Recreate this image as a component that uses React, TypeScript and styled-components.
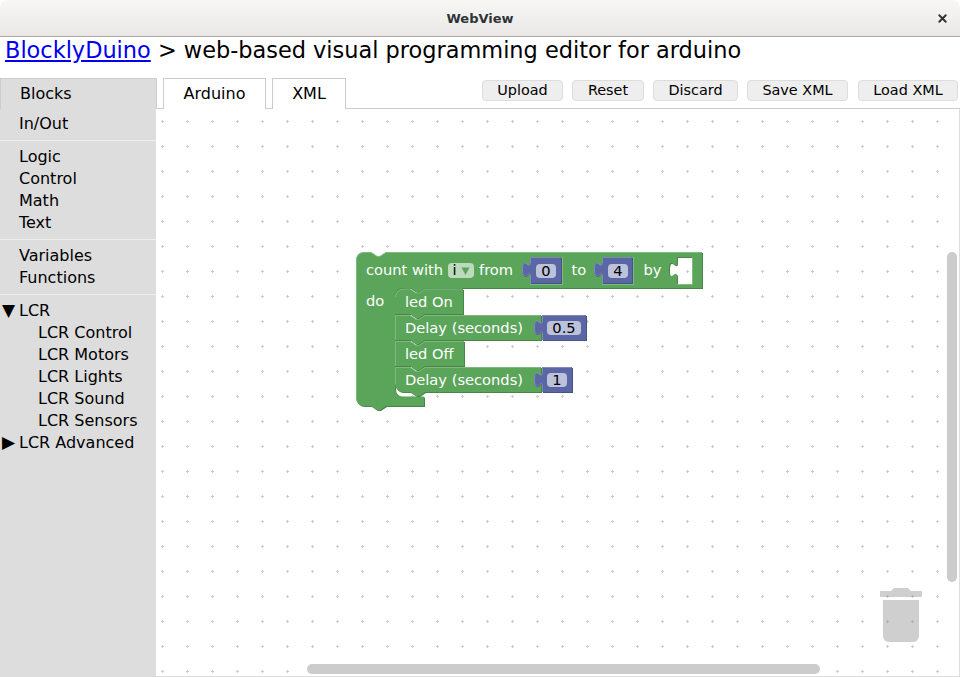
import React from "react";
import styled, { createGlobalStyle } from "styled-components";
import { X } from "lucide-react";

const GlobalStyle = createGlobalStyle`
    html, body {
        margin: 0;
        height: 100%;
        overflow: hidden;
        background: #fff;
        font-family: "DejaVu Sans", sans-serif;
        color: #000;
    }
`;

const Window = styled.div`
    display: flex;
    flex-direction: column;
    width: 960px;
    height: 677px;
`;

const TitleBar = styled.div`
    display: flex;
    flex: none;
    align-items: center;
    justify-content: center;
    position: relative;
    height: 36px;
    box-sizing: content-box;
    border-bottom: 1px solid #a9a9a7;
    border-radius: 8px 8px 0 0;
    background: linear-gradient(#f8f7f6, #e9e8e7);
    font-size: 13px;
    font-weight: bold;
    color: #2e3436;
`;

const CloseButton = styled.div`
    display: flex;
    position: absolute;
    right: 11.5px;
    top: 11.5px;
    color: #2e3436;
`;

const Heading = styled.div`
    flex: none;
    height: 41px;
    padding-left: 5px;
    font-size: 22.43px;
    line-height: 27px;
    white-space: nowrap;

    a {
        color: #0000ee;
    }
`;

const Main = styled.div`
    display: flex;
    flex: 1;
    min-height: 0;
`;

const Sidebar = styled.div`
    display: flex;
    flex: none;
    flex-direction: column;
    width: 156px;
    background: #ddd;
    font-size: 16px;
`;

const SidebarTab = styled.div`
    flex: none;
    width: 157px;
    height: 31px;
    padding-left: 19px;
    box-sizing: border-box;
    border: 1px solid #ccc;
    border-bottom: none;
    line-height: 29px;
    position: relative;
    z-index: 1;
    background: #ddd;
`;

const Group = styled.div<{ $top: number; $bottom: number }>`
    padding: ${(p) => p.$top}px 0 ${(p) => p.$bottom}px;
    border-bottom: 1px solid #eee;

    &:last-child {
        border-bottom: none;
    }
`;

const TreeItem = styled.div<{ $nested?: boolean }>`
    display: flex;
    height: 22px;
    line-height: 22px;
    padding-left: ${(p) => (p.$nested ? 38 : 19)}px;
    position: relative;
    white-space: nowrap;
`;

const Caret = styled.span`
    position: absolute;
    left: 2px;
    top: -1px;
    font-size: 17px;
    line-height: 22px;
`;

const Content = styled.div`
    display: flex;
    flex: 1;
    flex-direction: column;
    min-width: 0;
`;

const TabRow = styled.div`
    display: flex;
    flex: none;
    align-items: flex-start;
    height: 31px;
    padding: 0 2px 0 7px;
    box-sizing: border-box;
    border-bottom: 1px solid #ccc;
`;

const Tab = styled.div<{ $width: number }>`
    flex: none;
    width: ${(p) => p.$width}px;
    height: 31px;
    margin-right: 6px;
    box-sizing: border-box;
    border: 1px solid #ccc;
    border-bottom: none;
    background: #fff;
    font-size: 16px;
    line-height: 29px;
    text-align: center;
`;

const ButtonBar = styled.div`
    display: flex;
    gap: 9px;
    margin-left: auto;
    padding-top: 2px;
`;

const ToolButton = styled.div<{ $width: number }>`
    width: ${(p) => p.$width}px;
    height: 21px;
    box-sizing: border-box;
    border: 1px solid #ddd;
    border-radius: 4px;
    background: #eee;
    font-size: 14.4px;
    line-height: 18px;
    text-align: center;
    white-space: nowrap;

    &:last-child {
        margin-left: 1px;
    }
`;

const Canvas = styled.div`
    flex: 1;
    min-height: 0;
    position: relative;
    overflow: hidden;
    border-right: 1px solid #ddd;
    border-bottom: 1px solid #ddd;
`;

const WorkspaceSvg = styled.svg`
    display: block;
    width: 803px;
    height: 567px;
`;

const Scrollbar = styled.div<{ $vertical?: boolean }>`
    position: absolute;
    border-radius: 5px;
    background: #ccc;
    ${(p) =>
        p.$vertical
            ? "left: 791px; top: 143px; width: 10px; height: 330px;"
            : "left: 151px; top: 555px; width: 513px; height: 10px;"}
`;

const palette = {
    green: { fill: "#5ba55b", dark: "#498449", light: "#8cc08c" },
    blue: { fill: "#5b67a5", dark: "#495284", light: "#8c95c0" },
};

type Tone = keyof typeof palette;

const BlockFill = styled.path<{ $tone: Tone }>`
    fill: ${(p) => palette[p.$tone].fill};
    fill-rule: evenodd;
`;

const BlockDark = styled.path<{ $tone: Tone }>`
    fill: ${(p) => palette[p.$tone].dark};
    fill-rule: evenodd;
`;

const BlockLight = styled.path<{ $tone: Tone }>`
    fill: none;
    stroke: ${(p) => palette[p.$tone].light};
    stroke-width: 1;
    stroke-opacity: 0.75;
`;

const BlockLabel = styled.text`
    fill: #fff;
    font-family: "DejaVu Sans", sans-serif;
    font-size: 14.67px;
`;

const FieldBox = styled.rect<{ $tone: Tone }>`
    fill: ${(p) => (p.$tone === "green" ? "#bddabd" : "#bdc2db")};
`;

const FieldText = styled.text`
    fill: #000;
    font-family: "DejaVu Sans", sans-serif;
    font-size: 14.67px;
    text-anchor: middle;
`;

const DropArrow = styled.path`
    fill: #5ba55b;
`;

const GridMark = styled.path`
    fill: #ccc;
`;

const TrashPart = styled.path`
    fill: #888;
    opacity: 0.4;
`;

const NOTCH_DOWN = "l 6,4 3,0 6,-4";
const NOTCH_BACK = "l -6,4 -3,0 -6,-4";
const TAB_UP = "c 0,-10 -8,8 -8,-7.5 s 8,2.5 8,-7.5";

const Block = ({ d, tone, light }: { d: string; tone: Tone; light?: string }) => (
    <g>
        <BlockDark $tone={tone} d={d} transform="translate(1,1)" />
        <BlockFill $tone={tone} d={d} />
        {light && <BlockLight $tone={tone} d={light} />}
    </g>
);

const StatementBlock = ({ y, right, height, first, last }: { y: number; right: number; height: number; first?: boolean; last?: boolean }) => {
    const top = first ? `M 395,${y + 8} a 8,8 0 0 1 8,-8` : `M 395,${y}`;
    const edge = `H 410 ${NOTCH_DOWN} H ${right}`;
    const bottomY = y + height;
    const corner = last ? `H 403 a 8,8 0 0 1 -8,-8 Z` : `H 395 Z`;
    const d = `${top} ${edge} V ${bottomY} H 425 ${NOTCH_BACK} ${corner}`;
    const light = `${first ? `M 395.5,${y + 8} a 8,8 0 0 1 8,-8` : `M 395.5,${bottomY - (last ? 8 : 0)} V ${y + 0.5}`} H 410 ${NOTCH_DOWN} H ${right - 0.5}`;
    return <Block tone="green" d={d} light={light} />;
};

const ValueBlock = ({ x, y, right, height }: { x: number; y: number; right: number; height: number }) => {
    const d = `M ${x},${y} H ${right} V ${y + height} H ${x} V ${y + 20} ${TAB_UP} Z`;
    const light = `M ${x + 0.5},${y + height} V ${y + 20} ${TAB_UP} V ${y + 0.5} H ${right - 0.5}`;
    return <Block tone="blue" d={d} light={light} />;
};

const LoopBlock = () => {
    const outer = `M 356,260 a 8,8 0 0 1 8,-8 H 371 ${NOTCH_DOWN} H 702 V 288 H 425 ${NOTCH_BACK} H 403 a 8,8 0 0 0 -8,8 V 388.5 a 8,8 0 0 0 8,8 H 424 V 406 H 386 ${NOTCH_BACK} H 364 a 8,8 0 0 1 -8,-8 Z`;
    const hole = `M 677,257 H 692 V 284 H 677 V 277 ${TAB_UP} Z`;
    const light = `M 356.5,398 V 260 a 7.5,7.5 0 0 1 7.5,-7.5 H 371 ${NOTCH_DOWN} H 701.5`;
    return <Block tone="green" d={`${outer} ${hole}`} light={light} />;
};

const Workspace = () => (
    <WorkspaceSvg viewBox="156 109 803 567">
        <defs>
            <pattern id="grid" patternUnits="userSpaceOnUse" x="160" y="119" width="25" height="25">
                <GridMark d="M 1,2 h 3 v 1 h -3 Z M 2,1 h 1 v 3 h -1 Z" />
            </pattern>
        </defs>
        <rect x="156" y="109" width="803" height="567" fill="url(#grid)" />

        <LoopBlock />
        <BlockLight $tone="green" d="M 530,284.5 H 562.5 V 257 M 602,284.5 H 633.5 V 257 M 677,284.5 H 692.5 V 257" />
        <ValueBlock x={530} y={257} right={561} height={26} />
        <ValueBlock x={602} y={257} right={632} height={26} />

        <StatementBlock y={289} right={463} height={25} first />
        <StatementBlock y={315} right={541} height={25} />
        <StatementBlock y={341} right={464} height={25} />
        <StatementBlock y={367} right={541} height={25} last />
        <ValueBlock x={542} y={315} right={586} height={25} />
        <ValueBlock x={542} y={367} right={572} height={25} />

        <BlockLabel x="366" y="275">count with</BlockLabel>
        <FieldBox $tone="green" x="448" y="263" width="26" height="15" rx="4" />
        <FieldText x="454.5" y="275">i</FieldText>
        <DropArrow d="M 461.5,267.5 h 8 l -4,7.5 Z" />
        <BlockLabel x="479" y="275">from</BlockLabel>
        <BlockLabel x="571.5" y="275">to</BlockLabel>
        <BlockLabel x="643.5" y="275">by</BlockLabel>
        <BlockLabel x="366" y="306">do</BlockLabel>
        <BlockLabel x="405" y="307">led On</BlockLabel>
        <BlockLabel x="405" y="333">Delay (seconds)</BlockLabel>
        <BlockLabel x="405" y="359">led Off</BlockLabel>
        <BlockLabel x="405" y="385">Delay (seconds)</BlockLabel>

        <FieldBox $tone="blue" x="536" y="264" width="20" height="14" rx="4" />
        <FieldText x="546" y="276">0</FieldText>
        <FieldBox $tone="blue" x="608" y="264" width="20" height="14" rx="4" />
        <FieldText x="618" y="276">4</FieldText>
        <FieldBox $tone="blue" x="547" y="321" width="34" height="14" rx="4" />
        <FieldText x="564" y="333">0.5</FieldText>
        <FieldBox $tone="blue" x="547" y="373" width="20" height="14" rx="4" />
        <FieldText x="557" y="385">1</FieldText>

        <TrashPart d="M 891,591 l 3,-3 h 14 l 3,3 h 11 v 6 h -42 v -6 Z" />
        <TrashPart d="M 883,600 h 36 v 36 a 6,6 0 0 1 -6,6 h -24 a 6,6 0 0 1 -6,-6 Z" />
    </WorkspaceSvg>
);

const toolButtons = [
    { label: "Upload", width: 81 },
    { label: "Reset", width: 72 },
    { label: "Discard", width: 85 },
    { label: "Save XML", width: 101 },
    { label: "Load XML", width: 100 },
];

const lcrItems = ["LCR Control", "LCR Motors", "LCR Lights", "LCR Sound", "LCR Sensors"];

export default function App() {
    return (
        <Window>
            <GlobalStyle />
            <TitleBar>
                WebView
                <CloseButton>
                    <X size={13} strokeWidth={3.5} />
                </CloseButton>
            </TitleBar>
            <Heading>
                <a href="#home">BlocklyDuino</a> &gt; web-based visual programming editor for arduino
            </Heading>
            <Main>
                <Sidebar>
                    <SidebarTab>Blocks</SidebarTab>
                    <Group $top={4} $bottom={5}>
                        <TreeItem>In/Out</TreeItem>
                    </Group>
                    <Group $top={5} $bottom={5}>
                        <TreeItem>Logic</TreeItem>
                        <TreeItem>Control</TreeItem>
                        <TreeItem>Math</TreeItem>
                        <TreeItem>Text</TreeItem>
                    </Group>
                    <Group $top={5} $bottom={5}>
                        <TreeItem>Variables</TreeItem>
                        <TreeItem>Functions</TreeItem>
                    </Group>
                    <Group $top={5} $bottom={0}>
                        <TreeItem><Caret>▼</Caret>LCR</TreeItem>
                        {lcrItems.map((item) => (
                            <TreeItem $nested key={item}>{item}</TreeItem>
                        ))}
                        <TreeItem><Caret>▶</Caret>LCR Advanced</TreeItem>
                    </Group>
                </Sidebar>
                <Content>
                    <TabRow>
                        <Tab $width={103}>Arduino</Tab>
                        <Tab $width={74}>XML</Tab>
                        <ButtonBar>
                            {toolButtons.map((button) => (
                                <ToolButton $width={button.width} key={button.label}>{button.label}</ToolButton>
                            ))}
                        </ButtonBar>
                    </TabRow>
                    <Canvas>
                        <Workspace />
                        <Scrollbar $vertical />
                        <Scrollbar />
                    </Canvas>
                </Content>
            </Main>
        </Window>
    );
}
